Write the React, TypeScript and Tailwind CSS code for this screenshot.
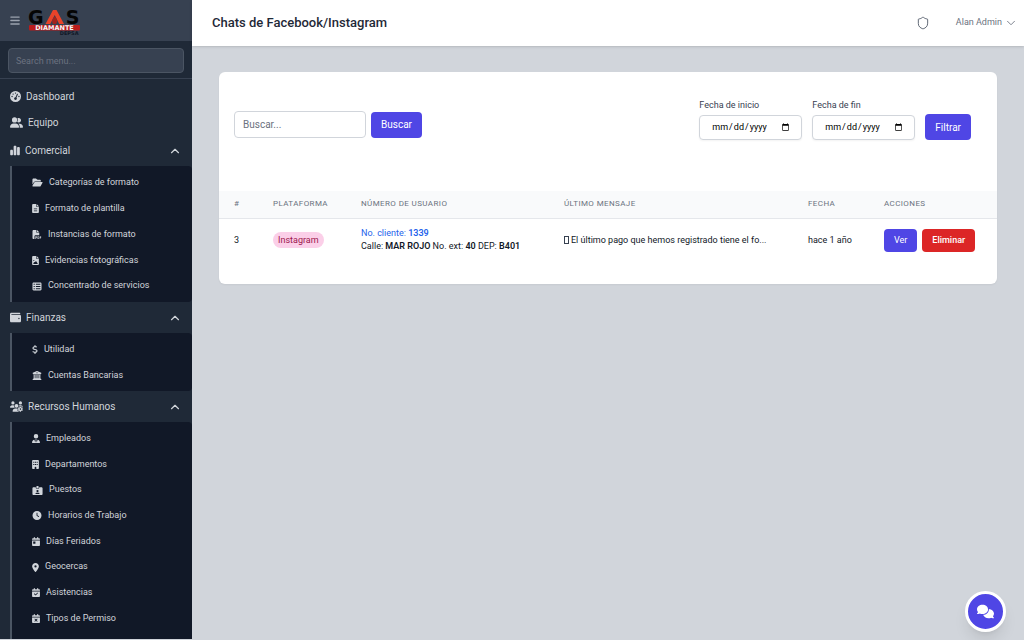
import type { ComponentType, ReactNode } from "react";
import {
  FaBars,
  FaBuilding,
  FaBuildingColumns,
  FaCalendarCheck,
  FaCalendarDay,
  FaCalendarXmark,
  FaChartSimple,
  FaClock,
  FaComments,
  FaDollarSign,
  FaFileImage,
  FaFileLines,
  FaFilePdf,
  FaFolderOpen,
  FaGaugeHigh,
  FaIdCardClip,
  FaLocationDot,
  FaTableList,
  FaUserGroup,
  FaUsersGear,
  FaUserTie,
  FaWallet,
} from "react-icons/fa6";
import { ChevronDown, ChevronUp, Shield } from "lucide-react";

type Icon = ComponentType<{ className?: string }>;
type Item = { icon: Icon; width: string; label: string };

const comercial: Item[] = [
  { icon: FaFolderOpen, width: "w-[11px]", label: "Categorías de formato" },
  { icon: FaFileLines, width: "w-[7px]", label: "Formato de plantilla" },
  { icon: FaFilePdf, width: "w-[10px]", label: "Instancias de formato" },
  { icon: FaFileImage, width: "w-[7px]", label: "Evidencias fotográficas" },
  { icon: FaTableList, width: "w-[10px]", label: "Concentrado de servicios" },
];

const finanzas: Item[] = [
  { icon: FaDollarSign, width: "w-[6px]", label: "Utilidad" },
  { icon: FaBuildingColumns, width: "w-[10px]", label: "Cuentas Bancarias" },
];

const recursos: Item[] = [
  { icon: FaUserTie, width: "w-[8px]", label: "Empleados" },
  { icon: FaBuilding, width: "w-[7px]", label: "Departamentos" },
  { icon: FaIdCardClip, width: "w-[11px]", label: "Puestos" },
  { icon: FaClock, width: "w-[10px]", label: "Horarios de Trabajo" },
  { icon: FaCalendarDay, width: "w-[8px]", label: "Días Feriados" },
  { icon: FaLocationDot, width: "w-[7px]", label: "Geocercas" },
  { icon: FaCalendarCheck, width: "w-[8px]", label: "Asistencias" },
  { icon: FaCalendarXmark, width: "w-[8px]", label: "Tipos de Permiso" },
  { icon: FaCalendarCheck, width: "w-[8px]", label: "" },
];

function Logo() {
  return (
    <svg viewBox="0 0 51 28" className="h-7 w-[51px] overflow-visible" role="img" aria-label="Gas Diamante">
      <g fontFamily="DejaVu Sans" fontWeight="700">
        <text x="-1" y="16.500" fontSize="19" fill="#050505">G</text>
        <text x="50.500" y="16.500" fontSize="19" fill="#050505" textAnchor="end">S</text>
        <path d="M16.500 17 24 3h3.500L35 17h-4.800L25.700 8 21.200 17z" fill="#e8432a" />
        <path d="M25.700 9.500c2.800 3 3.200 5 1.200 7.500h-2.600c-2-2.200-1.200-4.600 1.400-7.500z" fill="#a3231c" />
        <rect x="0" y="18" width="51" height="5.500" rx="1" fill="#b91c1c" />
        <text x="25.500" y="23" fontSize="6.500" fill="#f3f4f6" textAnchor="middle">DIAMANTE</text>
        <text x="49.500" y="28" fontSize="5" fill="#111827" textAnchor="end">DEPSA</text>
      </g>
    </svg>
  );
}

function TopLink({ icon: I, width, label }: Item) {
  return (
    <a href="#" className="flex h-[26px] items-center gap-[5px] px-2.5 text-[10px] text-[#d1d5db]">
      <I className={`h-[11px] ${width}`} />
      {label}
    </a>
  );
}

function Section({
  icon: I,
  width,
  label,
  items,
  listClass,
}: Item & { items: Item[]; listClass: string }) {
  return (
    <section>
      <button className="flex h-[31px] w-full items-center gap-[5px] px-2.5 text-[10px] text-[#d1d5db]">
        <I className={`h-[11px] ${width}`} />
        {label}
        <ChevronUp className="ml-auto size-3.5" />
      </button>
      <ul
        className={`ml-2.5 grid auto-rows-fr rounded-r border-l-2 border-[#4b5563] bg-[#111827] pt-1 pb-[3px] ${listClass}`}
      >
        {items.map(({ icon: J, width: w, label: text }) => (
          <li key={text} className="flex">
            <a href="#" className="flex items-center gap-1.5 pl-5 text-[9px] text-[#d1d5db]">
              <J className={`h-[9px] ${w}`} />
              {text}
            </a>
          </li>
        ))}
      </ul>
    </section>
  );
}

function Sidebar() {
  return (
    <aside className="flex h-[calc(100vh-1px)] w-48 shrink-0 flex-col overflow-hidden bg-[#1f2937]">
      <div className="flex h-[41px] shrink-0 items-center gap-[9px] bg-[#374151] px-2.5">
        <button aria-label="Menú" className="text-[#9ca3af]">
          <FaBars className="h-[11px] w-[10px]" />
        </button>
        <Logo />
      </div>
      <div className="shrink-0 border-b border-[#374151] px-2 pt-[7px] pb-[5px]">
        <input
          type="text"
          aria-label="Search menu"
          placeholder="Search menu..."
          className="block h-[25px] w-full rounded border border-[#4b5563] bg-[#374151] px-[7px] text-[9px] text-[#e5e7eb] placeholder:text-[#6b7280]"
        />
      </div>
      <nav className="min-h-0 flex-1 overflow-y-auto pt-1 [scrollbar-width:none]">
        <TopLink icon={FaGaugeHigh} width="w-[11px]" label="Dashboard" />
        <TopLink icon={FaUserGroup} width="w-[13px]" label="Equipo" />
        <Section icon={FaChartSimple} width="w-[10px]" label="Comercial" items={comercial} listClass="h-[136px]" />
        <Section icon={FaWallet} width="w-[11px]" label="Finanzas" items={finanzas} listClass="h-[58px]" />
        <Section icon={FaUsersGear} width="w-[13px]" label="Recursos Humanos" items={recursos} listClass="h-[238px]" />
      </nav>
    </aside>
  );
}

function DateField({ id, label }: { id: string; label: string }) {
  return (
    <div className="flex flex-col gap-[3px]">
      <label htmlFor={id} className="text-[9px] leading-[13px] text-[#374151]">
        {label}
      </label>
      <input
        id={id}
        type="date"
        className="h-[25px] w-[103px] rounded border border-[#d1d5db] bg-white px-[11px] text-[9px] text-black shadow-xs [&::-webkit-calendar-picker-indicator]:size-[9px] [&::-webkit-calendar-picker-indicator]:p-0"
      />
    </div>
  );
}

function Th({ children }: { children: ReactNode }) {
  return (
    <th className="px-[15px] text-left text-[8px] font-normal tracking-wider whitespace-nowrap text-[#6b7280] uppercase">
      {children}
    </th>
  );
}

export default function App() {
  return (
    <div className="flex h-screen overflow-hidden bg-[#d1d5db] font-['Roboto',sans-serif]">
      <Sidebar />
      <div className="flex min-w-0 flex-1 flex-col">
        <header className="flex h-[46px] shrink-0 items-center bg-white pr-1.5 pl-5 shadow">
          <h1 className="text-[13px] font-medium text-[#1f2937]">Chats de Facebook/Instagram</h1>
          <button aria-label="Seguridad" className="ml-auto text-[#4b5563]">
            <Shield className="size-3.5" strokeWidth={1.5} />
          </button>
          <button className="ml-[26px] flex items-center gap-0.5 text-[9px] text-[#6b7280]">
            Alan Admin
            <ChevronDown className="size-3.5" strokeWidth={1.5} />
          </button>
        </header>

        <main className="flex-1 px-[27px] pt-[26px]">
          <div className="overflow-hidden rounded-md bg-white pt-[27px] pb-[22px] shadow-xs">
            <div className="flex items-end justify-between pr-[26px] pl-[15px]">
              <form className="flex items-center gap-[5px] pb-0.5">
                <input
                  type="text"
                  aria-label="Buscar"
                  placeholder="Buscar..."
                  className="h-[27px] w-[132px] rounded border border-[#d1d5db] px-2 text-[10px] placeholder:text-[#6b7280]"
                />
                <button type="button" className="h-[26px] rounded-sm bg-[#4f46e5] px-2.5 text-[10px] text-white">
                  Buscar
                </button>
              </form>
              <form className="flex items-end gap-2.5">
                <DateField id="inicio" label="Fecha de inicio" />
                <DateField id="fin" label="Fecha de fin" />
                <button type="button" className="h-[26px] rounded-sm bg-[#4f46e5] px-2.5 text-[10px] text-white">
                  Filtrar
                </button>
              </form>
            </div>

            <table className="mt-[51px] w-full table-fixed text-[9px] text-[#111827]">
              <colgroup>
                <col className="w-[39px]" />
                <col className="w-[88px]" />
                <col className="w-[203px]" />
                <col />
                <col className="w-[76px]" />
                <col className="w-[128px]" />
              </colgroup>
              <thead>
                <tr className="h-[27px] border-b border-[#e5e7eb] bg-[#f9fafb]">
                  <Th>#</Th>
                  <Th>Plataforma</Th>
                  <Th>Número de usuario</Th>
                  <Th>Último mensaje</Th>
                  <Th>Fecha</Th>
                  <Th>Acciones</Th>
                </tr>
              </thead>
              <tbody>
                <tr className="h-11 whitespace-nowrap">
                  <td className="px-[15px]">3</td>
                  <td className="px-[15px]">
                    <span className="inline-block rounded-full bg-[#fbcfe8] px-[5px] leading-4 text-[#9d174d]">
                      Instagram
                    </span>
                  </td>
                  <td className="px-[15px] leading-[13px]">
                    <a href="#" className="block text-[#2563eb]">
                      No. cliente: <strong className="font-semibold">1339</strong>
                    </a>
                    Calle: <strong className="font-semibold">MAR ROJO</strong> No. ext:{" "}
                    <strong className="font-semibold">40</strong> DEP:{" "}
                    <strong className="font-semibold">B401</strong>
                  </td>
                  <td className="px-[15px]">
                    <span className="mr-0.5 inline-block h-2 w-[5px] border border-[#374151] align-[-1px]" />
                    El último pago que hemos registrado tiene el fo...
                  </td>
                  <td className="px-[15px]">hace 1 año</td>
                  <td className="px-[15px]">
                    <div className="flex gap-[5px]">
                      <button className="h-[23px] rounded-sm bg-[#4f46e5] px-2.5 text-white">Ver</button>
                      <button className="h-[23px] rounded-sm bg-[#dc2626] px-2.5 font-medium text-white">
                        Eliminar
                      </button>
                    </div>
                  </td>
                </tr>
              </tbody>
            </table>
          </div>
        </main>
      </div>

      <button
        aria-label="Abrir chat"
        className="fixed right-[18px] bottom-2 flex size-[41px] items-center justify-center rounded-full border-3 border-white bg-[#4f46e5] text-white shadow-lg"
      >
        <FaComments className="h-[15px] w-[17px]" />
      </button>
    </div>
  );
}
